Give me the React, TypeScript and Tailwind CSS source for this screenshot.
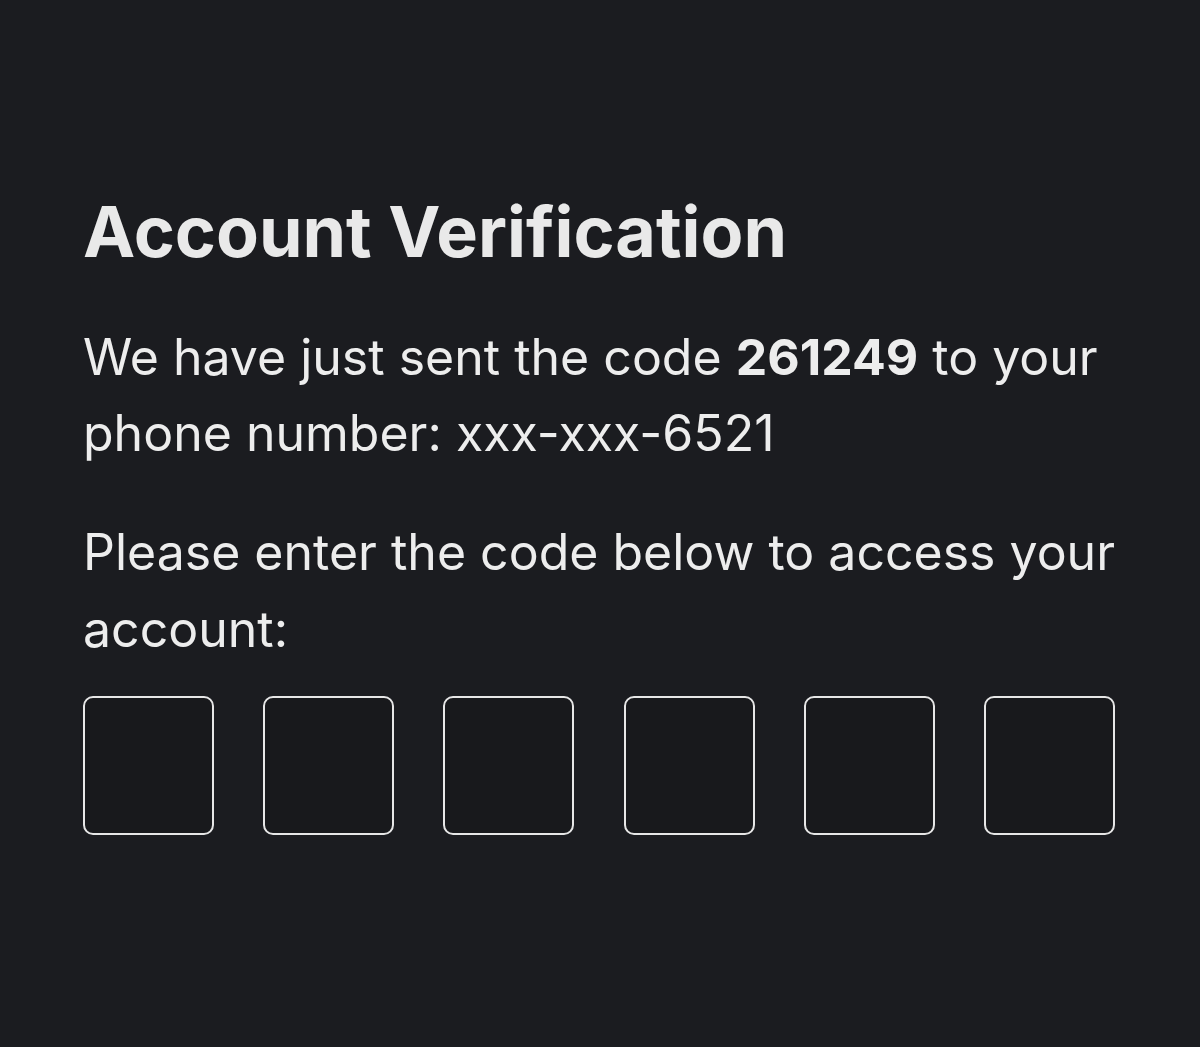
export default function App() {
  const boxes = [0, 1, 2, 3, 4, 5];
  return (
    <div className="min-h-[1047px] w-full bg-[#1b1c20] font-['Inter',sans-serif] text-[#ededed]">
      <div className="pl-[83px] pr-[85px] pt-[192px]">
        {/* Title */}
        <h1 className="text-[70px] leading-[80px] font-bold text-[#e9e9e9] whitespace-nowrap">
          Account Verification
        </h1>

        {/* Message */}
        <p className="mt-[47px] text-[50px] leading-[76px] whitespace-nowrap">
          We have just sent the code <span className="font-bold">261249</span> to your
          <br />
          phone number: xxx-xxx-6521
        </p>

        <p className="mt-[43px] text-[50px] leading-[77px] whitespace-nowrap">
          Please enter the code below to access your
          <br />
          account:
        </p>

        {/* Code inputs */}
        <div className="mt-[28px] flex justify-between">
          {boxes.map((i) => (
            <div
              key={i}
              className="w-[131px] h-[139px] rounded-[10px] border-2 border-[#e6e6e6] bg-[#18191c]"
            />
          ))}
        </div>
      </div>
    </div>
  );
}
